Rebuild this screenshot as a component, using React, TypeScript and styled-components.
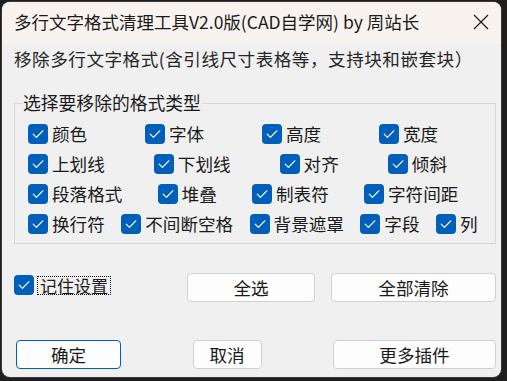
import React from "react";
import styled, { createGlobalStyle } from "styled-components";

const GlobalStyle = createGlobalStyle`
  html, body { margin: 0; padding: 0; background: #1e1e1e; }
  * { box-sizing: border-box; }
  body { font-family: "Noto Sans CJK SC", "Noto Sans", sans-serif; }
`;

const Desktop = styled.div`
  width: 507px;
  height: 381px;
  padding: 2px 6px 4px 2px;
  background: #1e1e1e;
`;

const Window = styled.div`
  width: 499px;
  height: 375px;
  border-radius: 8px;
  overflow: hidden;
  background: #f0f0f0;
  display: flex;
  flex-direction: column;
  box-shadow: 0 0 0 1px #3a3a3a;
`;

const TitleBar = styled.div`
  height: 42px;
  flex: 0 0 42px;
  background: #f9f3f0;
  display: flex;
  align-items: center;
  justify-content: space-between;
  padding: 0 12px 2px 12px;
`;

const Title = styled.div`
  font-size: 17.5px;
  line-height: 24px;
  color: #1a1a1a;
  white-space: nowrap;
`;

const CloseIcon = styled.svg`
  width: 16px;
  height: 16px;
  display: block;
`;

const Body = styled.div`
  padding: 3px 5px 0 12px;
  display: flex;
  flex-direction: column;
`;

const Subtitle = styled.div`
  font-size: 17.6px;
  line-height: 24px;
  color: #262626;
  white-space: nowrap;
  letter-spacing: 0.5px;
`;

const GroupBox = styled.div`
  position: relative;
  margin-top: 32px;
  width: 482px;
  border: 1px solid #d7d7d7;
  padding: 14.5px 0 4.5px 13px;
  display: flex;
  flex-direction: column;
`;

const GroupTitle = styled.span`
  position: absolute;
  top: -12px;
  left: 7px;
  padding: 0 1px;
  background: #f0f0f0;
  font-size: 17.8px;
  line-height: 20px;
  color: #1a1a1a;
  white-space: nowrap;
`;

const CheckRow = styled.div<{ $gap: number }>`
  display: flex;
  align-items: center;
  height: 30px;
  gap: ${(p) => p.$gap}px;
`;

const CheckItem = styled.label`
  display: flex;
  align-items: center;
  white-space: nowrap;
`;

const Box = styled.span`
  width: 20px;
  height: 20px;
  flex: 0 0 20px;
  border-radius: 4px;
  background: #005fb8;
  display: flex;
  align-items: center;
  justify-content: center;
`;

const CheckText = styled.span`
  margin-left: 4px;
  font-size: 17.6px;
  line-height: 22px;
  color: #1a1a1a;
`;

const ActionRow = styled.div`
  display: flex;
  align-items: center;
  margin-top: 29px;
  height: 29px;
  gap: 16px;
`;

const RememberGroup = styled.div`
  flex: 0 0 157px;
  display: flex;
  align-items: center;
  align-self: flex-start;
  margin-top: 2px;
`;

const FocusText = styled.span`
  margin-left: 3px;
  padding: 0 2px;
  border: 1px dotted #111;
  font-size: 17px;
  line-height: 17px;
  height: 19px;
  color: #1a1a1a;
  white-space: nowrap;
`;

const FooterRow = styled.div`
  display: flex;
  align-items: center;
  justify-content: space-between;
  margin: 38px 0 0 2px;
  width: 480px;
  height: 29px;
`;

const Button = styled.button<{ $w: number; $primary?: boolean }>`
  width: ${(p) => p.$w}px;
  height: 29px;
  padding: 0;
  border-radius: 4px;
  border: 1px solid ${(p) => (p.$primary ? "#005fb8" : "#d0d0d0")};
  background: #fdfdfd;
  font-family: "Noto Sans CJK SC", "Noto Sans", sans-serif;
  font-size: 17.6px;
  line-height: 27px;
  color: #1a1a1a;
  display: flex;
  align-items: center;
  justify-content: center;
`;

const Check = () => (
  <svg width="20" height="20" viewBox="0 0 20 20">
    <path d="M5.2 10.2 L8.4 13.4 L14.8 6.8" fill="none" stroke="#fff" strokeWidth="1.2" strokeLinecap="round" strokeLinejoin="round" />
  </svg>
);

const Option = ({ label }: { label: string }) => (
  <CheckItem>
    <Box>
      <Check />
    </Box>
    <CheckText>{label}</CheckText>
  </CheckItem>
);

const rows: { gap: number; items: string[] }[] = [
  { gap: 57.8, items: ["颜色", "字体", "高度", "宽度"] },
  { gap: 49, items: ["上划线", "下划线", "对齐", "倾斜"] },
  { gap: 35.2, items: ["段落格式", "堆叠", "制表符", "字符间距"] },
  { gap: 16.4, items: ["换行符", "不间断空格", "背景遮罩", "字段", "列"] },
];

export default function App() {
  return (
    <>
      <GlobalStyle />
      <Desktop>
        <Window>
          <TitleBar>
            <Title>多行文字格式清理工具V2.0版(CAD自学网) by 周站长</Title>
            <CloseIcon viewBox="0 0 16 16">
              <path d="M1 1 L15 15 M15 1 L1 15" stroke="#1a1a1a" strokeWidth="1.2" fill="none" />
            </CloseIcon>
          </TitleBar>
          <Body>
            <Subtitle>移除多行文字格式(含引线尺寸表格等，支持块和嵌套块）</Subtitle>
            <GroupBox>
              <GroupTitle>选择要移除的格式类型</GroupTitle>
              {rows.map((r, i) => (
                <CheckRow key={i} $gap={r.gap}>
                  {r.items.map((it) => (
                    <Option key={it} label={it} />
                  ))}
                </CheckRow>
              ))}
            </GroupBox>
            <ActionRow>
              <RememberGroup>
                <Box>
                  <Check />
                </Box>
                <FocusText>记住设置</FocusText>
              </RememberGroup>
              <Button $w={128}>全选</Button>
              <Button $w={165}>全部清除</Button>
            </ActionRow>
            <FooterRow>
              <Button $w={105} $primary>确定</Button>
              <Button $w={69}>取消</Button>
              <Button $w={163}>更多插件</Button>
            </FooterRow>
          </Body>
        </Window>
      </Desktop>
    </>
  );
}
